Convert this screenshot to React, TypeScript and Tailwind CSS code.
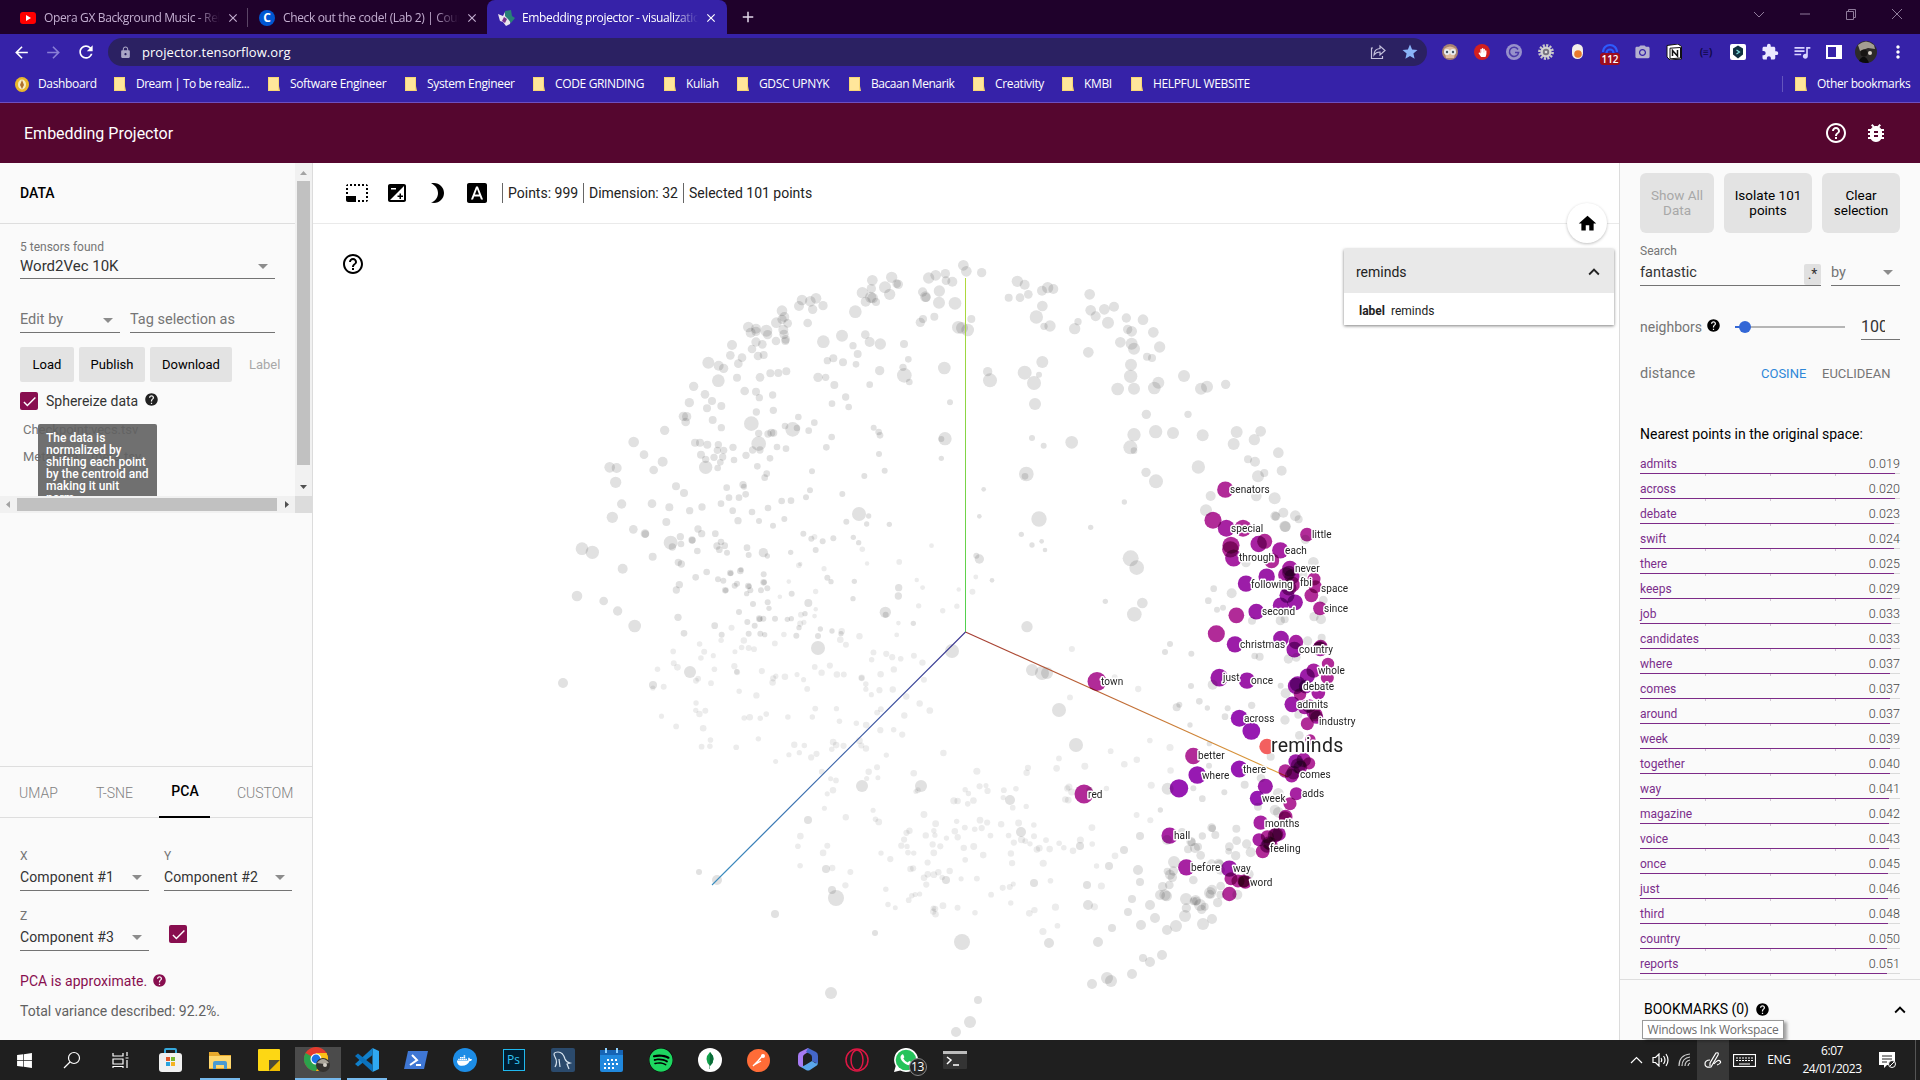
import React from 'react';
import {
  MdPhotoSizeSelectSmall, MdExposure, MdBrightness3, MdFontDownload, MdHelpOutline, MdBugReport, MdHome, MdHelp,
  MdExpandLess, MdArrowDropDown, MdCheck, MdArrowBack, MdArrowForward, MdRefresh, MdLock, MdStar, MdExtension,
  MdQueueMusic, MdMoreVert, MdCameraAlt, MdClose, MdAdd,
} from 'react-icons/md';
import { FaDocker, FaSpotify, FaWindows, FaHandPaper } from 'react-icons/fa';

const UI = "font-['Open_Sans','Noto_Sans',sans-serif]";

/* ---------- browser chrome ---------- */

function Tab({ icon, title, active, width }: { icon: React.ReactNode; title: string; active?: boolean; width: string }) {
  return (
    <div className={`flex h-[34px] items-center pt-px ${width} ${active ? 'rounded-t-[8px] bg-[#3622a8] text-white' : 'text-[#c3aed0]'}`}>
      <span className="flex w-[18px] shrink-0 justify-center">{icon}</span>
      <span className="ml-[7px] w-[176px] shrink-0 overflow-hidden whitespace-nowrap text-[12px] tracking-[-0.35px] [mask-image:linear-gradient(to_right,black_86%,transparent)]">{title}</span>
      <MdClose className="ml-[6px] size-[14px] shrink-0" />
    </div>
  );
}

function Folder() {
  return (
    <svg width="12" height="14" viewBox="0 0 12 14" className="shrink-0">
      <path d="M0 0h11v9l1 5H0z" fill="#f8d775" />
      <path d="M1 1h9v12H1z" fill="#ffe69b" />
    </svg>
  );
}

const bookmarks: [string, string][] = [
  ['Dream | To be realiz...', 'w-[154px] tracking-[-0.5px]'], ['Software Engineer', 'w-[137px]'], ['System Engineer', 'w-[128px]'],
  ['CODE GRINDING', 'w-[131px]'], ['Kuliah', 'w-[73px]'], ['GDSC UPNYK', 'w-[112px]'], ['Bacaan Menarik', 'w-[124px] tracking-[-0.45px]'],
  ['Creativity', 'w-[89px]'], ['KMBI', 'w-[69px]'], ['HELPFUL WEBSITE', 'w-[150px]'],
];

const extensions: React.ReactNode[] = [
  <svg width="16" height="16" viewBox="0 0 16 16"><circle cx="8" cy="8" r="8" fill="#a78270" /><path d="M2 5q6-5 12 0l-2 9H4z" fill="#e0bda0" /><circle cx="5" cy="8" r="3" fill="#e9eef2" /><circle cx="11" cy="8" r="3" fill="#e9eef2" /><circle cx="5" cy="8" r="1.2" fill="#456" /><circle cx="11" cy="8" r="1.2" fill="#456" /></svg>,
  <span className="flex size-[16px] items-center justify-center rounded-full bg-[#d21f1f]"><FaHandPaper className="size-[9px] text-white" /></span>,
  <svg width="16" height="16" viewBox="0 0 16 16"><circle cx="8" cy="8" r="8" fill="#9791cb" /><path d="M12 5.5A4.6 4.6 0 1 0 12.6 8.500H9" fill="none" stroke="#4b3aa8" strokeWidth="1.6" /></svg>,
  <svg width="16" height="16" viewBox="0 0 16 16"><circle cx="8" cy="8" r="6.600" fill="none" stroke="#c9c9c9" strokeWidth="2.600" strokeDasharray="2.100 1.350" /><circle cx="8" cy="8" r="5.600" fill="#d2d2d2" /><circle cx="8" cy="8" r="3.200" fill="#77747f" /><circle cx="8" cy="8" r="1.300" fill="#dcdcdc" /></svg>,
  <svg width="12" height="16" viewBox="0 0 12 16"><rect width="11" height="15" rx="5.500" fill="#f3efe9" /><circle cx="6" cy="10" r="3.800" fill="#e8792b" /></svg>,
  <div className="relative flex size-[18px] justify-center">
    <svg width="16" height="12" viewBox="0 0 16 12"><path d="M1 9a7 7 0 0 1 14 0M4.500 10a3.500 3.500 0 0 1 7 0" fill="none" stroke="#2d5bff" strokeWidth="2.200" /></svg>
    <span className="absolute top-[10px] left-[-1px] flex h-[12px] w-[20px] items-center justify-center rounded-[3px] bg-[#9d0d1f] text-[10px] font-semibold text-white">112</span>
  </div>,
  <MdCameraAlt className="size-[17px] text-[#b5b1cf]" />,
  <svg width="16" height="16" viewBox="0 0 16 16"><path d="M1 1.500L12 0l3.500 2.500V15L4 16 1 13z" fill="#fff" stroke="#111" /><path d="M4 4.200L14.500 3.500V14L4 14.800z" fill="none" stroke="#111" /><path d="M6.500 12V6.500l5 5.500V6" fill="none" stroke="#111" strokeWidth="1.500" /></svg>,
  <span className="text-[10px] font-bold text-[#100846]">(≡)</span>,
  <svg width="16" height="16" viewBox="0 0 16 16"><rect width="16" height="16" rx="2" fill="#fff" /><path d="M8 1.500l5 3v6l-5 4-5-4v-6z" fill="#10303f" /><path d="M6.500 6l3 2-3 2" fill="none" stroke="#7fe0e0" strokeWidth="1.200" /></svg>,
  <MdExtension className="size-[18px] text-[#ece9ff]" />,
  <MdQueueMusic className="size-[20px] text-[#d9d4ff]" />,
  <svg width="16" height="14" viewBox="0 0 16 14"><path d="M1 1h14v12H1z" fill="none" stroke="#fff" strokeWidth="2" /><path d="M10 1h5v12h-5z" fill="#fff" /></svg>,
  <svg width="22" height="22" viewBox="0 0 22 22"><circle cx="11" cy="11" r="11" fill="#2d2b2a" /><path d="M3 4q8-7 16 0l1 4-7-1-8 3z" fill="#a39e93" /><circle cx="9" cy="12" r="3.500" fill="#171513" /><path d="M4 20q5-9 10 1.500-5 1.500-10-1.500z" fill="#0b0b0b" /><circle cx="15" cy="12" r="2" fill="#d8d2c8" /></svg>,
  <MdMoreVert className="size-[20px] text-white" />,
];

function Browser() {
  return (
    <div className={UI}>
      <div className="flex h-[34px] bg-[#1f012b]">
        <div className="w-[19px]" />
        <Tab width="w-[228px]" title="Opera GX Background Music - Relaxing" icon={<svg width="16" height="12" viewBox="0 0 16 12"><rect width="16" height="12" rx="3" fill="#f00" /><path d="M6 3l5 3-5 3z" fill="#fff" /></svg>} />
        <div className="mt-[8px] h-[19px] w-px bg-[#5b4566]" />
        <div className="w-[10px]" />
        <Tab width="w-[229px]" title="Check out the code! (Lab 2) | Coursera" icon={<span className="flex size-[16px] items-center justify-center rounded-full bg-[#0056d2] text-[12px] font-bold text-white">C</span>} />
        <Tab active width="w-[240px] pl-[10px]" title="Embedding projector - visualization of" icon={<svg width="17" height="16" viewBox="0 0 17 16"><path d="M0 4l5 2 2-4 2 5 4 2-1 5-4 2-3-4-3-1z" fill="#ece6ee" /><path d="M7 1l6-1 1 6 3 2-4 5-3-4-3-3z" fill="#288076" /><path d="M6 7l3 2-2 4-3-2z" fill="#77318d" /></svg>} />
        <MdAdd className="mt-[8px] ml-[12px] size-[18px] text-[#e2d8ea]" />
        <div className="flex-1" />
        <div className="flex pt-[7px]">
          {['M2 5l5 5 5-5', 'M2 7h10', 'M2.500 4.500h7v8h-7zM4.500 4.500v-2h7v8h-2', 'M2 2l10 10M12 2L2 12'].map((d) => (
            <span key={d} className="flex w-[46px] justify-center"><svg width="14" height="14" viewBox="0 0 14 14"><path d={d} fill="none" stroke="#8f7b9b" /></svg></span>
          ))}
        </div>
      </div>
      <div className="flex h-[36px] items-center bg-[#3622a8]">
        <div className="flex w-[108px] items-center">
          <MdArrowBack className="ml-[12px] size-[19px] text-white" />
          <MdArrowForward className="ml-[13px] size-[19px] text-[#8a7fd6]" />
          <MdRefresh className="ml-[13px] size-[20px] text-white" />
        </div>
        <div className="flex h-[28px] w-[1319px] items-center rounded-full bg-[#2b2162]">
          <MdLock className="ml-[11px] size-[13px] text-[#aaa6c6]" />
          <span className="ml-[10px] pt-px text-[13px] tracking-[0.05px] text-white">projector.tensorflow.org</span>
          <div className="flex-1" />
          <svg width="16" height="16" viewBox="0 0 16 16" className="mr-[15px]"><path d="M3 4H1.500v10.500h11V12M4 11q0-6 6-6.500V2l5 4.500-5 4.500V8Q6 8 4 11z" fill="none" stroke="#c5c1dd" strokeWidth="1.200" /></svg>
          <MdStar className="mr-[8px] size-[18px] text-[#8ab4f8]" />
        </div>
        <div className="ml-[7px] flex">
          {extensions.map((e, i) => <span key={i} className="flex h-[22px] w-[32px] items-center justify-center">{e}</span>)}
        </div>
      </div>
      <div className="flex h-[33px] items-center border-b border-[#6d4fc0] bg-[#3622a8] pb-[4px] text-[12px] tracking-[-0.35px] whitespace-nowrap text-white">
        <div className="flex w-[114px] items-center gap-[9px] pl-[15px]">
          <svg width="14" height="15" viewBox="0 0 14 15"><ellipse cx="7" cy="7.500" rx="7" ry="7.500" fill="#e9b72b" /><ellipse cx="7" cy="7.500" rx="4" ry="5" fill="#f7ecc0" /><path d="M7 3l2 5-2 4-2-4z" fill="#b0712b" /></svg>
          Dashboard
        </div>
        {bookmarks.map(([name, w]) => <div key={name} className={`flex shrink-0 items-center gap-[10px] ${w}`}><Folder />{name}</div>)}
        <div className="flex-1" />
        <div className="flex h-[16px] w-[138px] items-center gap-[10px] border-l border-[#6455bd] pl-[12px]"><Folder />Other bookmarks</div>
      </div>
      <div className="flex h-[60px] items-center bg-[#55062f] font-[Roboto] text-white">
        <span className="ml-[24px] flex-1 pt-[2px] text-[16px]">Embedding Projector</span>
        <MdHelpOutline className="size-[24px]" />
        <MdBugReport className="mr-[32px] ml-[16px] size-[24px]" />
      </div>
    </div>
  );
}

/* ---------- left panel ---------- */

function Field({ text, muted, arrow = true, className }: { text: string; muted?: boolean; arrow?: boolean; className: string }) {
  return (
    <div className={`flex items-center justify-between border-b border-[#737373] whitespace-nowrap ${muted ? 'text-[#757575]' : 'text-[#333]'} ${className}`}>
      <span className="pt-px">{text}</span>
      {arrow && <MdArrowDropDown className="size-[24px] shrink-0 text-[#8c8c8c]" />}
    </div>
  );
}

function Check() {
  return <span className="flex size-[18px] shrink-0 items-center justify-center rounded-[2px] bg-[#880e4f]"><MdCheck className="size-[17px] text-white" /></span>;
}

function Tri({ d, c }: { d: string; c: string }) {
  return <svg width="17" height="17" viewBox="0 0 17 17"><path d={d} fill={c} /></svg>;
}

function LeftPanel() {
  return (
    <div className="flex w-[313px] shrink-0 flex-col border-r border-[#dcdcdc] bg-[#fafafa]">
      <div className="flex h-[333px]">
        <div className="relative w-[295px] overflow-hidden">
          <div className="flex h-[61px] items-center border-b border-[#dedede] pl-[20px] text-[14px] font-medium text-black">DATA</div>
          <div className="w-[400px] pl-[20px]">
            <div className="mt-[16px] h-[14px] text-[12px] leading-[14px] text-[#757575]">5 tensors found</div>
            <Field text="Word2Vec 10K" className="h-[25px] w-[255px] text-[15px]" />
            <div className="mt-[28px] flex gap-[10px]">
              <Field text="Edit by" muted className="h-[26px] w-[100px] text-[14.500px]" />
              <Field text="Tag selection as" muted arrow={false} className="h-[26px] w-[145px] text-[14.500px]" />
            </div>
            <div className="mt-[14px] flex h-[35px] gap-[5px] text-[13px] text-black">
              <span className="flex w-[54px] items-center justify-center rounded-[2px] bg-[#e3e3e3]">Load</span>
              <span className="flex w-[66px] items-center justify-center rounded-[2px] bg-[#e3e3e3]">Publish</span>
              <span className="flex w-[82px] items-center justify-center rounded-[2px] bg-[#e3e3e3]">Download</span>
              <span className="ml-[12px] flex w-[31px] items-center overflow-hidden text-[#a8a8a8]">Label</span>
            </div>
            <div className="mt-[10px] flex h-[18px] items-center text-[14px] text-[#333]">
              <Check /><span className="ml-[8px] pt-px">Sphereize data</span><MdHelp className="ml-[6px] mb-[3px] size-[15px] text-[#212121]" />
            </div>
            <div className="mt-[11px] flex h-[18px] items-center pl-[3px] text-[13px] text-[#777]"><span className="w-[68px]">Checkpoint:</span><span>vecs.tsv</span></div>
            <div className="mt-[9px] flex h-[18px] items-center pl-[3px] text-[13px] text-[#777]"><span className="w-[68px]">Metadata:</span><span>meta.tsv</span></div>
          </div>
          <div className="absolute top-[261px] left-[38px] w-[119px] rounded-[2px] bg-[#616161]/90 px-[8px] pt-[8px] pb-[8px] text-[12px] leading-[12px] font-medium text-white">
            The data is normalized by shifting each point by the centroid and making it unit norm.
          </div>
        </div>
        <div className="flex w-[17px] flex-col items-center justify-between bg-[#f1f1f1]">
          <div className="flex flex-col items-center"><Tri d="M5 12h7L8.500 8z" c="#a3a3a3" /><div className="mt-[1px] h-[284px] w-[13px] bg-[#c1c1c1]" /></div>
          <Tri d="M5 6h7l-3.500 4z" c="#505050" />
        </div>
      </div>
      <div className="flex h-[17px] w-[312px] bg-[#f1f1f1]">
        <Tri d="M10 5v7L6 8.500z" c="#a3a3a3" />
        <div className="mt-[2px] h-[13px] w-[260px] bg-[#c1c1c1]" />
        <Tri d="M8 5v7l4-3.500z" c="#505050" />
        <div className="ml-px flex-1 bg-[#dcdcdc]" />
      </div>
      <div className="flex-1" />
      <div className="flex h-[52px] items-center border-y border-[#dedede] text-[14px] font-light text-[#808080]">
        <span className="w-[78px] pt-[2px] pl-[19px]">UMAP</span>
        <span className="w-[81px] pt-[2px] pl-[18px]">T-SNE</span>
        <span className="flex h-[52px] w-[51px] items-center justify-center border-b-2 border-black pl-px font-medium text-black">PCA</span>
        <span className="pt-[2px] pl-[27px]">CUSTOM</span>
      </div>
      <div className="flex h-[222px] flex-col pl-[20px] text-[14px]">
        <div className="mt-[31px] flex gap-[15px]">
          <div><div className="h-[14px] text-[12px] leading-[14px] text-[#757575]">X</div><Field text="Component #1" className="h-[28px] w-[129px] pt-px tracking-[0.1px]" /></div>
          <div><div className="h-[14px] text-[12px] leading-[14px] text-[#757575]">Y</div><Field text="Component #2" className="h-[28px] w-[128px] pt-px tracking-[0.1px]" /></div>
        </div>
        <div className="mt-[18px] flex gap-[20px]">
          <div><div className="h-[14px] text-[12px] leading-[14px] text-[#757575]">Z</div><Field text="Component #3" className="h-[28px] w-[129px] pt-px tracking-[0.1px]" /></div>
          <div className="mt-[16px]"><Check /></div>
        </div>
        <div className="mt-[19px] flex h-[20px] items-center whitespace-nowrap text-[#880e4f]"><span className="w-[126px] pt-[2px] tracking-[0.05px]">PCA is approximate.</span><MdHelp className="ml-[6px] size-[15px]" /></div>
        <div className="mt-[11px] h-[20px] leading-[20px] text-[#616161]">Total variance described: 92.2%.</div>
      </div>
    </div>
  );
}

/* ---------- projection canvas ---------- */

/* Flat triples: x, y, radius, in thirds of a pixel from the quadrant origin. */
const upperLeft = [
  997,121,16, 1055,112,17, 1070,131,13, 1075,133,14, 1035,142,18, 1049,163,17, 994,146,14, 967,158,17, 992,172,17, 998,174,16, 977,185,15, 1008,186,12, 946,215,19,
  1166,114,17, 1187,106,16, 1216,101,14, 1218,122,13, 1237,125,15, 1198,153,17, 1148,156,14, 1156,170,16, 1158,172,14, 1197,188,18, 1245,190,19, 1149,237,12, 1141,247,14, 1183,230,12,
  786,180,16, 777,198,15, 811,184,16, 828,175,16, 849,197,14, 818,208,14, 803,249,13, 726,212,16, 733,231,15, 709,248,16, 726,238,14, 743,250,13, 730,269,15, 732,283,14, 737,298,13, 736,303,12,
  625,261,16, 648,266,15, 632,278,15, 648,274,14, 679,272,18, 683,284,14, 708,303,13, 648,306,14, 667,313,13, 636,327,13, 576,315,15, 571,346,13, 606,353,13, 654,348,13, 671,345,12, 505,368,18, 536,377,15, 551,385,14, 595,371,13,
  535,422,19, 591,413,12, 660,412,13, 691,400,12, 715,399,12, 739,394,12, 461,439,14, 495,463,13, 448,488,14, 516,483,12, 501,505,12, 544,498,12, 518,540,12, 430,529,14, 440,530,14, 437,546,13, 544,563,11, 374,571,14, 281,606,16, 312,644,13,
  209,682,16, 230,684,15, 227,727,17, 368,665,15, 341,690,13, 614,453,13, 648,455,12, 658,473,11, 698,465,11, 700,511,11, 649,516,11, 634,551,22, 656,580,11, 694,578,12, 701,579,11, 684,582,11, 656,611,22, 735,558,10, 758,568,22, 771,564,10, 775,531,10,
  465,608,12, 480,608,12, 502,614,12, 535,614,11, 532,631,11, 551,631,11, 483,644,12, 522,652,11, 548,651,11, 497,658,11, 497,682,20, 541,667,10, 533,684,10, 579,622,11, 582,660,10, 618,646,11, 638,630,11, 660,630,11, 711,621,10, 738,626,10, 690,655,10, 652,679,10,
  850,305,19, 906,287,18, 976,284,13, 989,306,15, 1021,312,17, 1092,312,12, 939,317,11, 953,342,12, 862,362,11, 880,355,12, 909,367,12, 948,373,10, 1105,358,10, 1089,382,11, 1093,406,22, 1108,426,10, 1019,392,14, 834,412,14, 857,412,11, 883,435,12, 989,434,10, 917,471,11, 876,491,10, 926,501,10,
  1213,384,19, 1230,487,9, 1215,596,20, 1204,597,9, 1204,655,8, 823,548,10, 806,572,10, 875,591,10, 859,622,10, 1001,563,9, 1016,576,10, 1020,586,10, 1017,642,9, 1034,692,9, 973,708,9, 680,701,10, 674,713,10, 816,694,9, 408,739,12, 432,759,12, 560,743,10, 609,734,11, 612,740,9,
  245,792,14, 336,791,13, 388,802,12, 217,832,17, 379,846,12, 449,812,11, 486,801,11, 543,791,10, 567,773,10, 597,773,10, 617,763,10, 578,812,10, 636,816,10, 594,842,11, 657,843,9, 684,804,10, 725,783,10, 753,782,10, 798,772,9, 810,751,9, 733,837,9, 699,857,9, 907,762,9, 957,822,21, 986,828,8, 980,852,8, 919,845,9, 1048,853,8,
  280,868,13, 315,881,13, 316,882,11, 392,908,21, 397,921,11, 421,890,11, 423,912,10, 456,900,11, 457,901,10, 474,867,11, 485,881,11, 526,881,10, 543,906,10, 531,918,11, 554,917,10, 538,929,10, 561,938,9, 472,933,10, 621,923,10, 626,945,9, 670,938,14, 682,948,8, 752,937,8,
  126,926,19, 157,937,20, 248,986,15, 338,950,12, 415,967,11, 424,972,11, 500,996,10, 467,1012,10, 571,999,10, 572,1000,8, 601,993,10, 603,989,8, 534,1018,9, 550,1022,9, 556,1051,10, 557,1051,8, 584,1037,9, 591,1031,9, 625,1038,10, 627,1039,8, 631,1051,9, 671,1027,10, 672,1027,8, 671,1003,9, 663,1051,9, 682,1045,9, 620,1061,8, 418,1034,11, 409,1050,11,
  111,1068,16, 191,1083,13, 233,1113,14, 284,1158,19, 414,1132,11, 524,1157,10, 432,1180,10, 545,1184,9, 597,1116,9, 639,1092,9, 683,1087,9, 687,1105,8, 658,1136,10, 659,1137,8, 670,1136,9, 705,1136,9, 742,1138,8, 754,1136,8, 622,1146,9, 644,1157,9, 626,1181,9, 661,1181,9, 674,1184,8, 769,1187,9, 777,1163,8, 755,1061,9, 805,1089,12, 795,1121,8, 841,1167,8, 876,1173,8, 903,1181,8, 834,1188,9,
  1076,1043,11, 1075,1068,11, 1036,1117,17, 1037,1124,9, 1120,1150,8, 862,1013,9, 873,1025,8, 943,1024,8, 939,1076,8, 790,881,9, 814,896,9, 848,904,9, 880,895,9, 940,892,8, 956,908,8, 827,930,9,
];

const upperRight = [
  70,76,16, 79,94,16, 125,98,14, 94,237,12, 55,262,19, 66,264,18, 83,270,19, 232,124,17, 254,134,15, 206,173,12, 240,173,13, 265,163,13, 306,152,15, 323,143,17, 340,147,15, 307,198,16, 289,231,20, 330,258,17, 312,259,11, 404,266,17, 414,245,11, 449,163,16, 452,211,16, 467,229,15, 493,208,16, 522,200,15, 504,248,18,
  559,234,14, 609,239,16, 563,268,14, 575,274,16, 640,277,16, 541,307,16, 575,311,18, 582,326,18, 659,321,17, 621,350,12, 636,354,12, 445,337,16, 573,374,18, 572,409,20, 582,446,18, 533,447,19, 643,444,19, 655,428,18, 732,408,18, 783,446,18, 801,440,18, 857,433,14, 307,366,18, 254,398,21, 282,429,21, 297,404,9, 143,395,14, 150,421,21, 285,492,18,
  619,523,14, 744,523,11, 582,584,20, 647,575,20, 699,579,18, 788,586,18, 571,622,21, 582,632,10, 890,576,18, 962,574,16, 943,599,17, 881,612,18, 1015,638,16, 924,658,12, 945,665,15, 1025,692,15, 954,709,18, 973,699,12, 775,681,20, 618,697,14, 648,724,21, 395,607,19, 276,594,9, 311,617,9, 259,702,22, 255,709,10, 131,748,7, 118,829,7, 297,837,23, 244,883,8, 276,915,8, 305,904,7, 315,930,7, 109,947,9, 118,957,14, 156,1021,7, 553,786,8, 452,862,8, 572,955,24, 590,983,22, 607,1089,16, 583,1123,22, 496,1084,8, 261,1160,17,
  812,768,15, 949,768,16, 1004,775,18, 798,811,18, 1005,828,14, 1008,829,13, 1030,818,15, 1066,827,16, 1076,838,12, 1035,859,17, 1036,860,16, 1096,898,14, 1120,967,16, 1090,1003,12, 918,968,14, 875,1060,15, 821,1046,10, 805,1082,10, 831,1109,9, 849,1103,9, 1150,1080,13, 1122,1130,14, 1143,1138,15, 1021,1142,14, 1034,1138,12, 936,1142,12,
];

const rightStrip = [
  30,552,9, 15,576,9, 94,581,9, 284,588,10, 299,590,12, 443,543,14, 485,533,12, 385,597,14, 409,592,13, 158,674,15, 93,678,9, 362,677,9, 50,742,12, 58,734,9, 118,724,10, 142,744,8, 203,745,9, 275,736,11, 195,770,10, 377,700,15, 375,780,14, 90,795,8, 418,826,13, 415,764,12, 148,851,8, 147,917,9, 332,890,12, 23,986,18, 100,985,9, 193,997,9, 127,1016,10, 254,974,12, 303,954,13, 355,1000,16, 345,1050,16, 355,1057,16, 294,1040,12, 1,1050,8, 155,1103,13, 157,1105,11, 127,1128,11, 166,1125,12, 93,1145,14, 95,1147,12, 84,1168,12, 114,1160,12, 122,1186,13, 229,1106,12, 230,1142,13, 208,1160,13, 206,1174,10, 260,1152,14, 272,1177,15, 227,1187,14, 155,1212,14, 176,1210,14, 179,1212,12, 181,1230,14, 22,1234,11, 40,1233,14, 30,1244,15, 37,1252,14, 8,1280,14, 28,1275,13, 100,1260,13, 265,1243,16, 182,1278,13, 156,1289,15, 150,1302,13, 173,1328,14, 181,1304,12, 232,1304,15, 15,1305,17, 20,1308,16, 107,1321,16, 109,1323,13, 79,1344,14, 134,1340,12, 125,1348,14, 101,1324,12,
];

/* Lower half, in view pixels. */
const lower = [
  563,683,5, 690,672,6, 653,685,4, 818,648,7, 952,651,7, 1059,710,7, 1076,745,7, 1042,673,7, 1032,670,6, 1047,673,6, 836,898,8, 832,890,4, 962,942,8, 831,993,6, 775,914,4, 875,933,3, 978,1000,4, 970,1022,6, 956,1032,5, 1049,943,5, 1107,978,6, 1111,981,6, 1132,974,5, 1092,984,5, 717,880,5, 699,872,3, 862,786,6, 921,786,6, 1010,800,5, 1021,832,5, 946,880,4, 826,869,4, 808,820,4, 1034,883,4,
  1150,962,5, 1162,955,5, 1176,926,6, 1203,924,6, 1185,916,6, 1212,919,5, 1200,905,6, 1186,899,6, 1210,893,6, 1167,930,5, 1155,918,5, 1141,925,5, 1160,895,5, 1174,862,6, 1167,840,5, 1195,848,5, 1182,832,4, 1140,836,4, 1124,850,4, 1109,866,4, 1080,846,4, 1088,905,5, 1087,885,4, 1138,870,5, 1140,882,4, 1128,912,4, 1112,928,4, 1098,942,5, 1143,958,4, 1150,905,5, 1132,899,4,
];

function scatter(seed: number, n: number, cx: number, cy: number, rx: number, ry: number, r: number) {
  let s = seed;
  const next = () => { s = (s * 16807) % 2147483647; return s / 2147483647; };
  const out: number[] = [];
  for (let i = 0; i < n; i++) {
    const a = next() * Math.PI * 2;
    const d = Math.sqrt(next());
    out.push(cx + Math.cos(a) * d * rx, cy + Math.sin(a) * d * ry, r + next() * 0.9);
  }
  return out;
}

const depth = [
  ...scatter(71, 110, 795, 690, 145, 75, 2.5),
  ...scatter(913, 80, 915, 830, 130, 88, 2.5),
  ...scatter(337, 60, 1010, 850, 110, 90, 2.7),
  ...scatter(4211, 24, 870, 580, 110, 60, 2.2),
  ...scatter(155, 22, 1100, 740, 80, 110, 2.7),
];

const purple = [
  196,89,24,0, 159,181,25,0, 199,205,25,1, 249,205,25,0, 213,256,25,0, 211,268,24,0, 221,294,25,1, 296,252,24,1, 314,244,22,0, 361,271,24,1, 335,302,22,0, 441,224,20,0, 390,326,23,1, 378,345,23,1, 320,350,24,2, 258,371,24,2, 396,350,22,1, 387,338,20,1, 398,373,22,0, 381,406,22,2, 387,384,22,1, 462,357,19,0, 454,406,20,0, 466,380,19,0, 405,427,23,2, 362,436,23,2, 480,445,20,0, 289,455,23,2, 229,466,23,0, 169,521,25,0, 225,553,24,2, 363,536,23,2, 408,546,21,1, 403,569,23,2, 482,560,20,0, 481,566,22,1, 478,564,19,1,
  504,612,18,0, 502,653,19,0, 461,632,21,1, 442,648,22,2, 178,653,26,2, 261,662,24,2, 413,672,23,2, 408,678,24,2, 437,680,20,2, 475,698,20,1, 420,703,18,0, 397,733,23,2, 434,742,20,1, 447,738,20,1, 460,758,20,1, 467,764,20,0, 470,772,19,1, 442,791,19,0, 451,838,15,0, 238,775,25,3, 274,813,26,3, 100,888,24,0, 112,945,26,3, 238,927,25,3, 57,985,27,3, 407,904,21,2, 431,900,21,1, 415,917,22,1, 421,922,20,1, 447,910,18,0, 376,933,20,0, 400,938,20,1, 395,947,20,1, 316,979,22,2, 292,1015,22,3, 409,1001,19,1, 390,1031,19,0, 377,1070,20,0, 375,1072,18,0, 302,1088,21,1, 357,1122,20,1, 345,1126,21,1, 349,1123,20,0, 297,1139,19,1, 322,1130,19,0, 321,1158,20,1, 327,1149,20,1, 332,1152,20,0, 308,1174,20,0, 29,1127,24,1, 79,1222,24,1, 208,1226,24,2, 213,1256,19,0, 234,1263,19,0, 252,1263,19,0, 256,1266,20,0, 252,1265,17,0, 208,1302,21,0,
];
const hues = ['#b12b98', '#a722a2', '#9c1da8', '#9719b2'];

/* Labels: left edge and baseline in view pixels. */
const labels: [string, number, number][] = [
  ['senators', 1230, 493], ['special', 1231, 532], ['little', 1312, 538], ['each', 1285, 554], ['through', 1239, 561], ['never', 1295, 572], ['fbi', 1300, 586], ['following', 1251, 588], ['space', 1321, 592], ['second', 1262, 615], ['since', 1324, 612], ['christmas', 1240, 648], ['country', 1299, 653], ['whole', 1318, 674], ['just', 1223, 681], ['once', 1251, 684], ['debate', 1303, 690], ['admits', 1297, 708], ['industry', 1319, 725], ['across', 1244, 722], ['better', 1198, 759], ['where', 1202, 779], ['there', 1243, 773], ['comes', 1300, 778], ['week', 1262, 802], ['adds', 1302, 797], ['months', 1265, 827], ['feeling', 1270, 852], ['hall', 1174, 839], ['before', 1191, 871], ['way', 1233, 872], ['word', 1250, 886], ['town', 1101, 685], ['red', 1088, 798],
];

function Dots({ data, ox = 0, oy = 0, k = 1, fill = '#e1e1e1' }: { data: number[]; ox?: number; oy?: number; k?: number; fill?: string }) {
  const out: React.ReactNode[] = [];
  for (let i = 0; i < data.length; i += 3) {
    out.push(<circle key={i} className="mix-blend-multiply" cx={ox + data[i] * k} cy={oy + data[i + 1] * k} r={data[i + 2] * k} fill={fill} />);
  }
  return <>{out}</>;
}

function Projection() {
  const marks: React.ReactNode[] = [];
  for (let i = 0; i < purple.length; i += 4) {
    marks.push(<circle key={i} className="mix-blend-multiply" cx={1160 + purple[i] / 3} cy={460 + purple[i + 1] / 3} r={purple[i + 2] / 3 + 0.2} fill={hues[purple[i + 3]]} />);
  }
  const t = 1 / 3;
  return (
    <svg width="1306" height="816" viewBox="313 224 1306 816" className="isolate block">
      <defs>
        <linearGradient id="ax" x1="0" x2="1"><stop offset="0" stopColor="#a33a32" /><stop offset="1" stopColor="#e0a23a" /></linearGradient>
        <linearGradient id="ay" x1="0" y1="1" x2="0" y2="0"><stop offset="0" stopColor="#4fd04f" /><stop offset="1" stopColor="#b2d83c" /></linearGradient>
        <linearGradient id="az" x1="1" x2="0"><stop offset="0" stopColor="#3b348f" /><stop offset="1" stopColor="#3a8fc0" /></linearGradient>
      </defs>
      <Dots data={depth} fill="#ececec" />
      <Dots data={upperLeft} ox={540} oy={240} k={t} />
      <Dots data={upperRight} ox={940} oy={240} k={t} />
      <Dots data={rightStrip} ox={1160} oy={460} k={t} />
      <Dots data={lower} />
      <rect x="965" y="278" width="1" height="354" fill="url(#ay)" />
      <path d="M965.500 632L1288 777" stroke="url(#ax)" strokeWidth="1.100" />
      <path d="M965.500 632L712 885" stroke="url(#az)" strokeWidth="1.100" />
      {marks}
      <circle className="mix-blend-multiply" cx="1097" cy="681.500" r="9.500" fill="#b12b98" />
      <circle className="mix-blend-multiply" cx="1084" cy="794" r="9.500" fill="#b12b98" />
      <circle cx="1267" cy="746.500" r="7.700" fill="#f3605f" />
      <g fontFamily="Roboto" fontSize="10" letterSpacing="0.1" fill="#222" stroke="#fff" strokeWidth="3" strokeLinejoin="round" style={{ paintOrder: 'stroke' }}>
        {labels.map(([w, x, y]) => <text key={w} x={x} y={y - 0.4}>{w}</text>)}
        <text x="1271" y="751.500" fontSize="19.500" letterSpacing="0.300">reminds</text>
      </g>
    </svg>
  );
}

function Center() {
  return (
    <div className="relative flex w-[1306px] shrink-0 flex-col bg-white">
      <div className="flex h-[61px] items-center border-b border-[#eaeaea] text-[14px] text-[#222]">
        <MdPhotoSizeSelectSmall className="ml-[32px] size-[24px] text-black" />
        <MdExposure className="ml-[16px] size-[24px] text-black" />
        <MdBrightness3 className="ml-[16px] size-[24px] text-black" />
        <MdFontDownload className="ml-[16px] size-[24px] text-black" />
        <span className="ml-[13px] flex w-[81px] border-l border-[#666] pl-[5px] leading-[20px]">Points: 999</span>
        <span className="flex w-[100px] border-l border-[#666] pl-[5px] leading-[20px]">Dimension: 32</span>
        <span className="flex border-l border-[#666] pl-[5px] leading-[20px]">Selected 101 points</span>
      </div>
      <Projection />
      <MdHelpOutline className="absolute top-[89px] left-[28px] size-[24px] text-black" />
      <div className="absolute top-[40px] left-[1254px] flex size-[40px] items-center justify-center rounded-full bg-white shadow-[0_1px_3px_rgba(0,0,0,0.25)]"><MdHome className="size-[21px] text-black" /></div>
      <div className="absolute top-[86px] left-[1031px] w-[270px] bg-white text-[#222] shadow-[0_1px_3px_rgba(0,0,0,0.5)]">
        <div className="flex h-[44px] items-center justify-between bg-[#e9e9e9] pt-[2px] pr-[9px] pl-[12px] text-[14px]">reminds<MdExpandLess className="size-[22px]" /></div>
        <div className="flex h-[32px] items-center pt-[4px] pl-[15px] text-[12px]"><b className="mr-[6px]">label</b>reminds</div>
      </div>
    </div>
  );
}

/* ---------- right panel ---------- */

const neighbors: [string, number][] = [
  ['admits', 19], ['across', 20], ['debate', 23], ['swift', 24], ['there', 25], ['keeps', 29], ['job', 33], ['candidates', 33], ['where', 37], ['comes', 37], ['around', 37], ['week', 39], ['together', 40], ['way', 41], ['magazine', 42], ['voice', 43], ['once', 45], ['just', 46], ['third', 48], ['country', 50], ['reports', 51],
];

function RightPanel() {
  return (
    <div className="relative flex w-[301px] shrink-0 flex-col border-l border-[#dcdcdc] bg-[#fafafa]">
      <div className="pl-[20px]">
        <div className="mt-[10px] flex h-[60px] gap-[10px] text-center text-[13.500px] leading-[15px] text-black">
          <span className="flex w-[74px] items-center justify-center rounded-[6px] bg-[#e3e3e3] text-[#a8a8a8]">Show All<br />Data</span>
          <span className="flex w-[88px] items-center justify-center rounded-[6px] bg-[#e3e3e3]">Isolate 101<br />points</span>
          <span className="flex w-[78px] items-center justify-center rounded-[6px] bg-[#e3e3e3]">Clear<br />selection</span>
        </div>
        <div className="mt-[11px] h-[14px] text-[12px] leading-[14px] text-[#757575]">Search</div>
        <div className="flex gap-[10px] text-[14.500px]">
          <div className="flex h-[28px] w-[181px] items-center justify-between border-b border-[#737373] text-[#333]"><span className="pt-[2px]">fantastic</span><span className="mt-[6px] flex h-[21px] w-[17px] items-center justify-center rounded-[2px] bg-[#e0e0e0] text-[14px]">.*</span></div>
          <Field text="by" muted className="h-[28px] w-[69px] pt-px" />
        </div>
        <div className="mt-[28px] flex h-[26px] w-[260px] text-[14px] text-[#757575]">
          <span className="w-[66px] leading-[27px]">neighbors</span>
          <MdHelp className="mt-[4px] size-[15px] text-black" />
          <div className="relative ml-[14px] h-[26px] w-[110px]">
            <div className="mt-[12px] h-[2px] bg-[#b5b5b5]" />
            <div className="absolute top-[7px] left-[4px] size-[12px] rounded-full bg-[#3367d6]" />
            <div className="absolute top-[12px] left-0 h-[2px] w-[6px] bg-[#3367d6]" />
          </div>
          <span className="ml-[16px] w-[39px] border-b border-[#737373]"><span className="block w-[24px] overflow-hidden text-[16px] leading-[25px] text-[#333]">100</span></span>
        </div>
        <div className="mt-[24px] flex h-[20px] items-center text-[#757575]">
          <span className="w-[121px] text-[14.500px]">distance</span>
          <span className="w-[61px] text-[13px] text-[#2e87d8]">COSINE</span>
          <span className="text-[13px]">EUCLIDEAN</span>
        </div>
        <div className="mt-[40px] h-[20px] text-[14px] leading-[20px] whitespace-nowrap text-black">Nearest points in the original space:</div>
        <div className="mt-[7px] w-[260px]">
          {neighbors.map(([word, d]) => (
            <div key={word} className="h-[25px] text-[12px] text-[#7b2d8b]">
              <div className="flex h-[22px] items-center justify-between pt-[4px]"><span>{word}</span><span className="text-[12.500px] font-light tracking-[0.1px] text-[#444]">{'0.0' + d}</span></div>
              <div className="h-px bg-[#dadada]"><div className="h-px bg-[#7d2b88]" style={{ width: `${(1 - d / 1000) * 100}%` }} /></div>
              <div className="flex h-[2px] w-[196px] justify-between pl-[65px]"><i className="w-px bg-[#cfc3d2]" /><i className="w-px bg-[#cfc3d2]" /><i className="w-px bg-[#cfc3d2]" /></div>
            </div>
          ))}
        </div>
      </div>
      <div className="flex-1" />
      <div className="flex h-[61px] items-center border-t border-[#dedede] pr-[9px] pb-px pl-[24px] text-[14px] text-black">
        BOOKMARKS (0)<MdHelp className="ml-[6px] size-[15px]" /><div className="flex-1" /><MdExpandLess className="size-[22px]" />
      </div>
      <div className={`absolute top-[857px] left-[22px] flex h-[19px] w-[142px] items-center justify-center border border-[#999] bg-white text-[12px] tracking-[-0.25px] whitespace-nowrap text-[#6c6c6c] shadow-[3px_2px_3px_rgba(0,0,0,0.35)] ${UI}`}>Windows Ink Workspace</div>
    </div>
  );
}

/* ---------- taskbar ---------- */

type App = { icon: React.ReactNode; line?: string; on?: boolean };
const apps: App[] = [
  { icon: <svg width="23" height="24" viewBox="0 0 23 24"><path d="M6 7V2q0-1 1-1h9q1 0 1 1v5" fill="none" stroke="#35a8dc" strokeWidth="2" /><rect y="5" width="23" height="19" rx="3" fill="#f1f1f1" /><path d="M7 9h4v4H7z" fill="#e2582c" /><path d="M12 9h4v4h-4z" fill="#78b830" /><path d="M7 14h4v4H7z" fill="#29a3dd" /><path d="M12 14h4v4h-4z" fill="#f6b321" /></svg> },
  { line: 'w-[40px]', icon: <svg width="22" height="19" viewBox="0 0 22 19"><path d="M0 1h9l2 3h11v14H0z" fill="#e8a92c" /><path d="M0 5h22v12H0z" fill="#ffd86f" /><path d="M4 18v-6q0-2 2-2h10q2 0 2 2v6h-3v-4H7v4z" fill="#4a9bd3" /></svg> },
  { icon: <svg width="22" height="22" viewBox="0 0 22 22"><path d="M0 1q0-1 1-1h20q1 0 1 1v10L11 22H1q-1 0-1-1z" fill="#fdd714" /><path d="M11 22V11h11z" fill="#4e4a36" /><path d="M11 22h11V11z" fill="#f0bd00" /></svg> },
  { line: 'w-[46px]', on: true, icon: <svg width="27" height="26" viewBox="0 0 27 26"><circle cx="12" cy="12" r="12" fill="#e33b2e" /><path d="M12 12L1.600 6A12 12 0 0 0 12 24l5-9z" fill="#2ba24c" /><path d="M12 12h11.500A12 12 0 0 0 22.400 6H12z" fill="#fbc116" /><path d="M22.400 6A12 12 0 0 1 12 24l5.200-9L17 6z" fill="#fbc116" /><circle cx="12" cy="12" r="5.500" fill="#fff" /><circle cx="12" cy="12" r="4.400" fill="#1a73e8" /><circle cx="19" cy="18" r="7" fill="#35322f" /><path d="M13 16q6-8 12 0l-5 1z" fill="#aaa499" /><circle cx="21" cy="18" r="2" fill="#d3cec5" /></svg> },
  { line: 'w-[40px]', icon: <svg width="24" height="24" viewBox="0 0 24 24"><path d="M17.500 0L24 3v18l-6.500 3z" fill="#2fa9f2" /><path d="M17.500 0v7L3 18.500l-3-2.500z" fill="#1180cb" /><path d="M17.500 24v-7L3 5.500 0 8z" fill="#0b72bd" /></svg> },
  { icon: <svg width="24" height="18" viewBox="0 0 24 18"><path d="M4 0h20l-4 18H0z" fill="#3f77d4" /><path d="M8 4l5 5-7 5M12 14h5" fill="none" stroke="#fff" strokeWidth="2" /></svg> },
  { icon: <span className="flex size-[24px] items-center justify-center rounded-full bg-[#1d8de6]"><FaDocker className="size-[15px] text-white" /></span> },
  { icon: <span className="flex size-[22px] items-center justify-center border border-[#20b8ee] bg-[#001d30] text-[12px] text-[#31c5f4]">Ps</span> },
  { icon: <svg width="24" height="24" viewBox="0 0 24 24"><rect width="24" height="24" rx="2" fill="#2b4a6c" /><path d="M4 19Q7 14 4 9t3-5q5 0 7 7 1 3 5 4l-3 1 2 5M8 11l1 8" fill="none" stroke="#d7e4ef" strokeWidth="1.200" /></svg> },
  { icon: <svg width="23" height="24" viewBox="0 0 23 24"><rect y="2" width="23" height="22" rx="2" fill="#2088dd" /><path d="M0 2h23v5H0z" fill="#1664b4" /><path d="M6 0v5M17 0v5" stroke="#8bd0ff" strokeWidth="2" /><path d="M7 12h12M4 16h15M4 20h10" stroke="#fff" strokeWidth="2" strokeDasharray="2 2" /></svg> },
  { icon: <span className="flex size-[24px] items-center justify-center rounded-full bg-black"><FaSpotify className="size-[24px] text-[#1ed760]" /></span> },
  { icon: <svg width="24" height="24" viewBox="0 0 24 24"><circle cx="12" cy="12" r="12" fill="#fff" /><path d="M12 4q7 7 0 14-7-7 0-14z" fill="#12a14b" /><path d="M12 4q7 7 0 14v3h-.500z" fill="#0a6b38" /></svg> },
  { icon: <svg width="23" height="23" viewBox="0 0 23 23"><circle cx="11.500" cy="11.500" r="11.500" fill="#ff6c37" /><path d="M6 17l5-5 5-6M7 16l7-4" fill="none" stroke="#fff" strokeWidth="1.400" /><circle cx="16" cy="7" r="2" fill="#fff" /></svg> },
  { icon: <svg width="22" height="24" viewBox="0 0 22 24"><path d="M11 0L3 4Q1 5 1 8v7q0 3 3 4l3 1q-1-1-1-3V9q0-2 2-3l5-3z" fill="#a77bf3" /><path d="M11 0l8 4q2 1 2 4v6q0 2-2 1l-4-2V9q0-2-2-3L9 4z" fill="#4467c9" /><path d="M4 19l5 3q2 1 4 0l6-4q2-1 2-4-1 2-3 1l-3-2-5 3q-3 2-6 3z" fill="#5aa7ec" /></svg> },
  { icon: <svg width="24" height="24" viewBox="0 0 24 24"><circle cx="12" cy="12" r="11" fill="none" stroke="#dd1744" strokeWidth="1.500" /><ellipse cx="12" cy="12" rx="6" ry="10" fill="none" stroke="#dd1744" strokeWidth="1.500" /></svg> },
  { icon: <div className="relative"><svg width="24" height="24" viewBox="0 0 24 24"><path d="M0 24l1.700-6A12 12 0 1 1 6.300 22.500z" fill="#fff" /><circle cx="12" cy="12" r="10.300" fill="#25c35b" /><path d="M8 6.500q1-.700 1.500.500l.800 2q0 .700-1 1.600 1.500 2.800 4.400 4l1.500-1.700 2.800 1.400q.3 2.700-3 3-4-.300-7.500-5-2.300-3.700.5-5.800z" fill="#fff" /></svg><span className="absolute top-[10px] left-[15px] flex size-[18px] items-center justify-center rounded-full border border-[#888] bg-[#252525] text-[12px] tracking-[-0.3px] text-white">13</span></div> },
  { icon: <svg width="24" height="18" viewBox="0 0 24 18"><rect width="24" height="18" rx="1" fill="#343434" /><path d="M0 0h24v3H0z" fill="#bcbcbc" /><path d="M4 6l4 3-4 4M10 14h6" fill="none" stroke="#fff" strokeWidth="1.500" /></svg> },
];

const thin = { fill: 'none', stroke: '#fff', strokeWidth: 1.2 };

function Taskbar() {
  return (
    <div className={`flex h-[40px] bg-[#1f1f1f] text-white ${UI}`}>
      <span className="flex w-[48px] items-center justify-center"><FaWindows className="size-[17px]" /></span>
      <span className="flex w-[48px] items-center justify-center"><svg width="18" height="18" viewBox="0 0 18 18"><circle cx="11" cy="7" r="5.500" {...thin} /><path d="M7 11l-6 6" {...thin} /></svg></span>
      <span className="flex w-[48px] items-center justify-center"><svg width="17" height="17" viewBox="0 0 17 17"><path d="M1 1v3h10V1M1 7h10v5H1zM1 16v-1.500h10V16M15 0v4M15 8v8M13.500 6h3" {...thin} /></svg></span>
      <div className="w-[2px]" />
      {apps.map((a, i) => (
        <span key={i} className="relative flex w-[49px] items-center justify-center">
          {a.on && <span className="absolute inset-y-0 left-[2px] mt-[7px] w-[46px] bg-[#4b4b4b]" />}
          <span className="relative">{a.icon}</span>
          {a.line && <span className={`absolute bottom-0 h-[2px] bg-[#76b9ed] ${a.line}`} />}
        </span>
      ))}
      <div className="flex-1" />
      <span className="flex w-[24px] items-center justify-center"><svg width="13" height="8" viewBox="0 0 13 8"><path d="M1 7l5.500-5.500L12 7" {...thin} /></svg></span>
      <span className="flex w-[24px] items-center justify-center"><svg width="17" height="14" viewBox="0 0 17 14"><path d="M1 4.500h2.500L7 1v12L3.500 9.500H1zM9 5q1.500 2 0 4M11.500 3q3 4 0 8M14 1q4 6 0 12" {...thin} /></svg></span>
      <span className="flex w-[25px] items-center justify-center"><svg width="14" height="14" viewBox="0 0 14 14"><path d="M1 13Q1 2 12 1M4 13Q4 5 12 4M7 13q0-5 5-6M10 13q0-2 2-3" {...thin} stroke="#ccc" /></svg></span>
      <span className="flex w-[32px] items-center justify-center bg-[#383838]"><svg width="18" height="17" viewBox="0 0 18 17"><path d="M6 8q-5 0-5 4t6 3l7-12q1-3-2-2L6 11v3M10 12q4-5 6-3t-3 4" {...thin} /></svg></span>
      <span className="flex w-[31px] items-center justify-center"><svg width="23" height="13" viewBox="0 0 23 13"><rect x=".500" y=".500" width="22" height="12" {...thin} /><path d="M3 4h17M3 6.500h17" stroke="#fff" strokeDasharray="2 1" /><path d="M6 10h11" stroke="#fff" /></svg></span>
      <span className="flex w-[38px] items-center justify-center text-[12px] tracking-[-0.3px]">ENG</span>
      <span className="flex w-[68px] flex-col items-center justify-center text-[12px] leading-[18px] tracking-[-0.45px]"><span>6:07</span><span>24/01/2023</span></span>
      <span className="flex w-[44px] items-center justify-center"><svg width="18" height="17" viewBox="0 0 18 17"><path d="M0 0h16v13H8l-3 3v-3H0z" fill="#fff" /><path d="M3 4h10M3 7h10M3 10h5" stroke="#222" /><circle cx="13" cy="12" r="3.500" fill="#1f1f1f" stroke="#fff" /><path d="M11 14l4-4" stroke="#fff" /></svg></span>
      <span className="ml-[5px] w-[5px] border-l border-[#555]" />
    </div>
  );
}

export default function App() {
  return (
    <div className="h-[1080px] w-[1920px] overflow-hidden bg-white font-[Roboto]">
      <Browser />
      <div className="flex h-[877px]">
        <LeftPanel />
        <Center />
        <RightPanel />
      </div>
      <Taskbar />
    </div>
  );
}
